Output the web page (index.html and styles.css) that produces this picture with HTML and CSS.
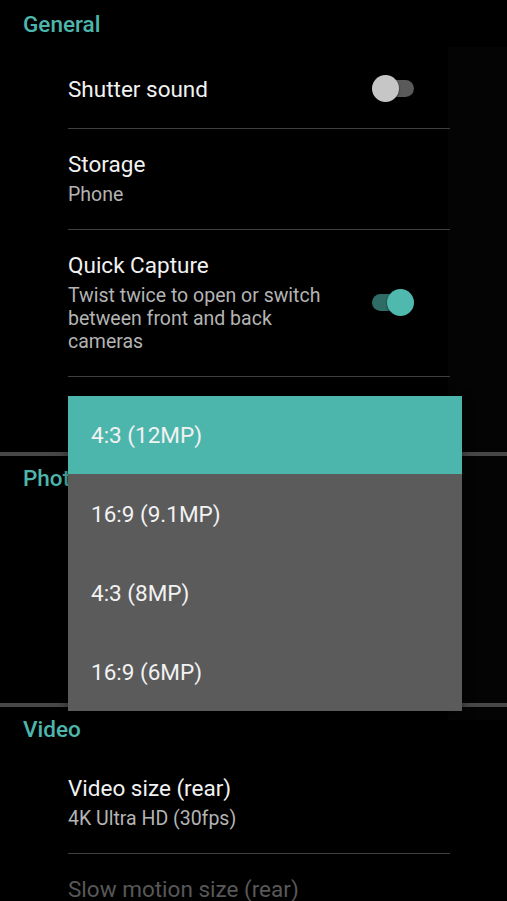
FILE: index.html
```html
<!DOCTYPE html>
<html>
<head>
<meta charset="utf-8">
<link rel="stylesheet" href="styles.css">
</head>
<body>
<div class="screen">
  <div class="shade"></div>
  <section class="section">
    <div class="section-header first">General</div>
    <div class="row row-single">
      <div class="text"><div class="title">Shutter sound</div></div>
      <div class="switch"><span class="track"></span><span class="thumb"></span></div>
    </div>
    <div class="row">
      <div class="text">
        <div class="title">Storage</div>
        <div class="summary">Phone</div>
      </div>
    </div>
    <div class="row">
      <div class="text">
        <div class="title">Quick Capture</div>
        <div class="summary">Twist twice to open or switch between front and back cameras</div>
      </div>
      <div class="switch on"><span class="track"></span><span class="thumb"></span></div>
    </div>
    <div class="row row-hidden"></div>
  </section>
  <div class="section-divider"></div>
  <section class="section">
    <div class="section-header">Photo</div>
    <div class="photo-body"></div>
  </section>
  <div class="section-divider"></div>
  <section class="section">
    <div class="section-header">Video</div>
    <div class="row">
      <div class="text">
        <div class="title">Video size (rear)</div>
        <div class="summary">4K Ultra HD (30fps)</div>
      </div>
    </div>
    <div class="row row-last">
      <div class="text">
        <div class="title disabled">Slow motion size (rear)</div>
      </div>
    </div>
  </section>

  <div class="menu">
    <div class="menu-item selected">4:3 (12MP)</div>
    <div class="menu-item">16:9 (9.1MP)</div>
    <div class="menu-item">4:3 (8MP)</div>
    <div class="menu-item">16:9 (6MP)</div>
  </div>
</div>
</body>
</html>
```

FILE: styles.css
```css
html, body {
  margin: 0;
  padding: 0;
  background: #000;
}

.screen {
  position: relative;
  width: 507px;
  height: 901px;
  overflow: hidden;
  background: #000;
  font-family: Roboto, "Noto Sans", "Liberation Sans", sans-serif;
  color: #f4f4f4;
}

.shade {
  position: absolute;
  left: 448px;
  top: 47px;
  width: 59px;
  height: 673px;
  background: #040404;
}

.section {
  position: relative;
  display: flex;
  flex-direction: column;
}

.section-header {
  padding: 9px 0 11px 23px;
  font-size: 22.5px;
  line-height: 26px;
  font-weight: 500;
  color: #4db6ac;
}

.section-header.first {
  padding: 11px 0 10px 23px;
}

.section-divider {
  position: relative;
  height: 4px;
  background: #474747;
}

.row {
  display: flex;
  align-items: center;
  margin: 0 57px 0 68px;
  padding: 22px 0 23px;
  border-bottom: 1px solid #3f3f3f;
}

.row-single {
  padding: 28px 0 26px;
}

.row-hidden {
  height: 75px;
  padding: 0;
  box-sizing: border-box;
  border-bottom: none;
}

.row-last {
  border-bottom: none;
}

.photo-body {
  height: 201px;
}

.text {
  flex: 1;
  min-width: 0;
}

.title {
  font-size: 22.5px;
  line-height: 26px;
  color: #f2f2f2;
}

.title.disabled {
  color: #585858;
}

.summary {
  margin-top: 6px;
  font-size: 19.5px;
  line-height: 23px;
  color: #b4b4b4;
}

.switch {
  position: relative;
  flex: none;
  width: 42px;
  height: 27px;
  margin: 0 36px 0 30px;
}

.switch .track {
  position: absolute;
  left: 0;
  right: 0;
  top: 5px;
  height: 17px;
  border-radius: 9px;
  background: #5a5a5a;
}

.switch .thumb {
  position: absolute;
  top: 0;
  left: 0;
  width: 27px;
  height: 27px;
  border-radius: 50%;
  background: #c6c6c6;
  box-shadow: 0 1px 2px rgba(0, 0, 0, 0.6);
}

.switch.on .track {
  background: #2e6c65;
}

.switch.on .thumb {
  left: 15px;
  background: #4fb9ad;
}

.menu {
  position: absolute;
  left: 68px;
  top: 396px;
  width: 394px;
  display: flex;
  flex-direction: column;
  background: #5b5b5c;
  box-shadow: 0 4px 10px rgba(0, 0, 0, 0.5);
}

.menu-item {
  display: flex;
  align-items: center;
  height: 79px;
  padding-left: 23px;
  font-size: 22.5px;
  color: #f2f2f2;
}

.menu-item.selected {
  height: 78px;
  background: #4db6ac;
}
```
